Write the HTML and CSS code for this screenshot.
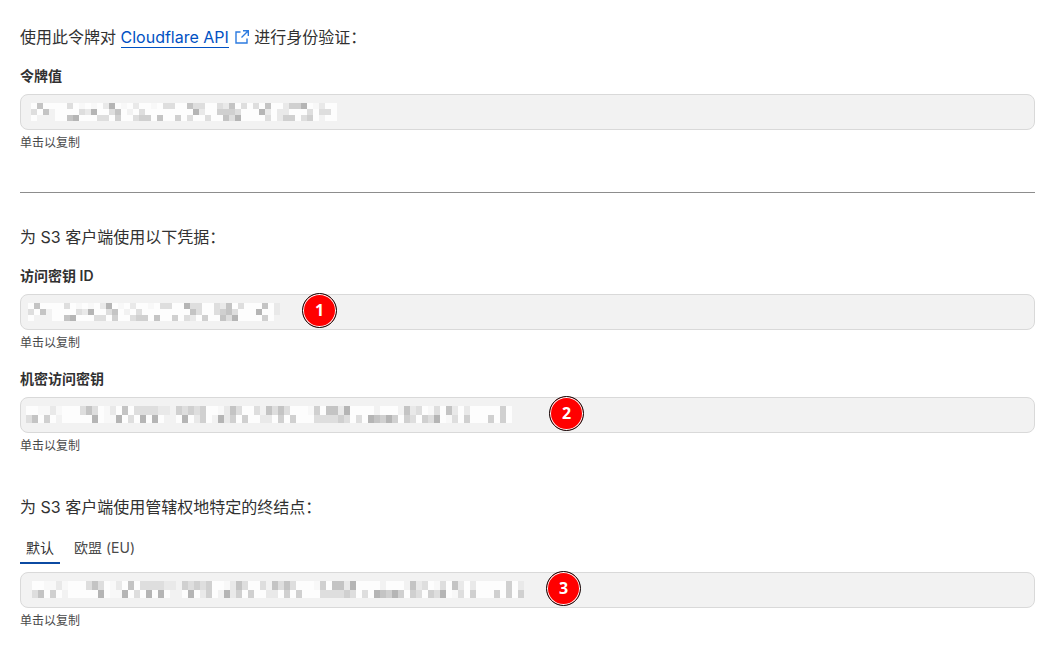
FILE: index.html
```html
<!DOCTYPE html>
<html lang="zh-CN">
<head>
    <meta charset="UTF-8">
    <meta name="viewport" content="width=device-width, initial-scale=1.0">
    <title>API 令牌</title>
    <link rel="stylesheet" href="styles.css">
</head>
<body>
    <main class="page">
        <section class="section">
            <p class="intro">使用此令牌对 <a href="##" class="link"><span class="link-text">Cloudflare API</span><svg class="link-icon" viewBox="0 0 16 16" aria-hidden="true"><path d="M6.500 3H2v11h11V9.500M9 1.700h5.300V7M14 2L7.500 8.500"/></svg></a> 进行身份验证：</p>
            <div class="field">
                <label class="field-label" for="token">令牌值</label>
                <button type="button" class="field-box" id="token">
                    <svg class="mosaic" data-rows="w4wwww2wawaw15waw1wwaw22ww422ww214w2w2w4ww1335wa1ww|2w40wwww215ww24w0w2wwwwwwww51ww3332www51w11www2w22w|w000ww45www22w3ww233w4ww3w2ww2ww425wwww2w133w23w0ww"></svg>
                </button>
                <span class="field-hint">单击以复制</span>
            </div>
        </section>

        <hr class="divider">

        <section class="section">
            <p class="intro">为 S3 客户端使用以下凭据：</p>
            <div class="field">
                <label class="field-label" for="access-key">访问密钥 ID</label>
                <button type="button" class="field-box key-id" id="access-key">
                    <svg class="mosaic" data-rows="w4wwww2wawaw15waw1wwaw22ww522ww214w2www4w1|2w40wwww215ww24w0w2wwwwwwww42ww2342www5ww1|w000ww45www22w3ww233w4ww3w21w3ww425wwww3w0"></svg>
                    <span class="badge badge-one">1</span>
                </button>
                <span class="field-hint">单击以复制</span>
            </div>
            <div class="field">
                <label class="field-label" for="secret-key">机密访问密钥</label>
                <button type="button" class="field-box secret" id="secret-key">
                    <svg class="mosaic tall" data-rows="wwaa1awww242wa1w4w222211032323wwa142ww204242wwwa3w4415wwww0www0412wa2w41w1wwwww3w|24w3w0wwwww5waa5w2w5w5w00w5w13w0513w3ww11w3w3www222232w2w54353w32w325wa2w3www3w3w"></svg>
                    <span class="badge badge-two">2</span>
                </button>
                <span class="field-hint">单击以复制</span>
            </div>
        </section>

        <section class="section">
            <p class="intro">为 S3 客户端使用管辖权地特定的终结点：</p>
            <div class="tabs" role="tablist">
                <button type="button" class="tab active" role="tab" aria-selected="true">默认</button>
                <button type="button" class="tab" role="tab" aria-selected="false">欧盟 (EU)</button>
            </div>
            <div class="field">
                <button type="button" class="field-box endpoint" aria-labelledby="endpoint-hint">
                    <svg class="mosaic tall" data-rows="wwaa1awww242wa1w4w222211032323wwa142ww204242wwwa3w4415wwww0www0412wa2w41w1wwwww3w1|24w3w0wwwww5waa5w2w5w5w00w5w13w0513w3ww11w3w3www222232w2w54353w32w325wa2w3www3w3w3"></svg>
                    <span class="badge badge-three">3</span>
                </button>
                <span class="field-hint" id="endpoint-hint">单击以复制</span>
            </div>
        </section>
    </main>

    <script src="mosaic.js"></script>
</body>
</html>
```
FILE: mosaic.js
```js
// 马赛克每个色块的灰度，0 为透明
var shades = {
    w: "#fdfdfd",
    a: "#f8f8f8",
    1: "#e9e9e9",
    2: "#dedede",
    3: "#d0d0d0",
    4: "#c4c4c4",
    5: "#b5b5b5"
};

var mosaics = document.getElementsByClassName("mosaic");

for (var i = 0; i < mosaics.length; i++) {
    drawMosaic(mosaics[i]);
}

// 按行绘制色块
function drawMosaic(svg) {
    var rows = svg.getAttribute("data-rows").split("|");
    svg.setAttribute("viewBox", "0 0 " + rows[0].length + " " + rows.length);
    svg.setAttribute("preserveAspectRatio", "none");
    svg.style.width = rows[0].length * 6 + "px";
    for (var y = 0; y < rows.length; y++) {
        for (var x = 0; x < rows[y].length; x++) {
            var shade = shades[rows[y][x]];
            if (!shade) {
                continue;
            }
            var rect = document.createElementNS("http://www.w3.org/2000/svg", "rect");
            rect.setAttribute("x", x);
            rect.setAttribute("y", y);
            rect.setAttribute("width", 1);
            rect.setAttribute("height", 1);
            rect.setAttribute("fill", shade);
            svg.appendChild(rect);
        }
    }
}
```
FILE: styles.css
```css
*{
    padding: 0;
    margin: 0;
    box-sizing: border-box;
}

body{
    background-color: #fff;
    color: #313131;
    font-family: Inter, "Noto Sans CJK SC", sans-serif;
}

button{
    font: inherit;
    color: inherit;
    border: none;
    background: none;
    cursor: pointer;
}

.page{
    padding: 25px 26px 16px 20px;
}

.intro{
    font-size: 16px;
    line-height: 24px;
    margin-bottom: 17px;
}

.link{
    color: #0051c3;
    text-decoration: none;
}

.link-text{
    border-bottom: 1px solid #0051c3;
}

.link-icon{
    width: 16px;
    height: 16px;
    margin-left: 5px;
    vertical-align: -2px;
    fill: none;
    stroke: #2c7be0;
    stroke-width: 1.4;
}

/* ==================字段===================== */
.field{
    display: flex;
    flex-direction: column;
}

.field + .field{
    margin-top: 18px;
}

.field-label{
    font-size: 14px;
    font-weight: 600;
    line-height: 20px;
    margin-bottom: 8px;
}

.field-box{
    position: relative;
    display: flex;
    align-items: flex-start;
    width: 100%;
    height: 36px;
    padding-top: 8px;
    padding-left: 10px;
    border: 1px solid #d9d9d9;
    border-radius: 8px;
    background-color: #f2f2f2;
}

.key-id{
    padding-left: 7px;
}

.secret{
    padding-left: 5px;
}

.endpoint{
    padding-left: 11px;
}

.field-hint{
    font-size: 12px;
    line-height: 16px;
    margin-top: 5px;
    color: #4a4a4a;
}

.mosaic{
    height: 18px;
    shape-rendering: crispEdges;
}

.mosaic.tall{
    height: 17px;
}

/* ==================序号===================== */
.badge{
    position: absolute;
    top: -2px;
    width: 35px;
    height: 35px;
    border: 1px solid #111;
    border-radius: 50%;
    background-color: #f00;
    box-shadow: inset 0 0 0 1px #fff;
    color: #fff;
    font-family: "Noto Sans", sans-serif;
    font-size: 16px;
    font-weight: 700;
    line-height: 33px;
    text-align: center;
}

.badge-one{
    left: 281px;
}

.badge-two{
    left: 528px;
}

.badge-three{
    left: 525px;
}

.divider{
    height: 1px;
    margin: 41px 0 32px;
    border: none;
    background-color: #8d8d8d;
}

.section + .section{
    margin-top: 41px;
}

/* ==================标签页===================== */
.tabs{
    display: flex;
    gap: 8px;
    margin-bottom: 8px;
}

.tab{
    padding: 2px 6px 4px;
    border-bottom: 2px solid transparent;
    font-size: 14px;
    line-height: 20px;
    color: #4a4a4a;
}

.tab.active{
    border-bottom-color: #0b4aa2;
    color: #313131;
}
```
